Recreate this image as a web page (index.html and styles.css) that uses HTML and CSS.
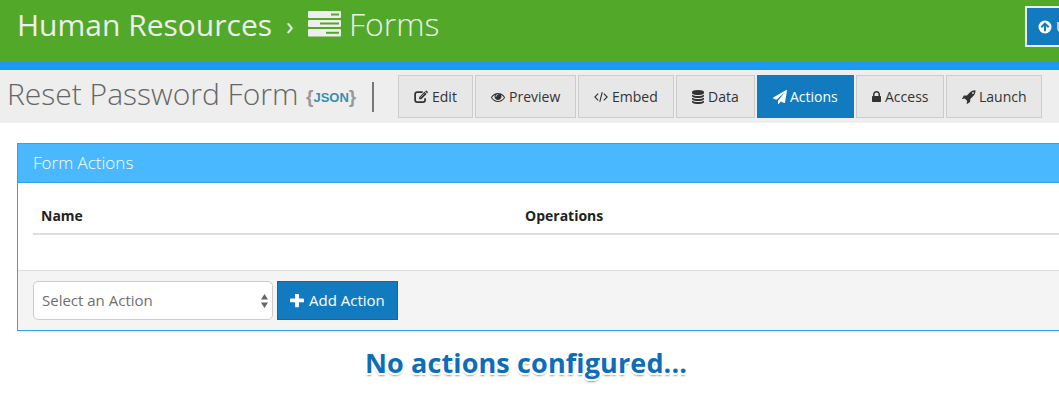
FILE: index.html
```html
<!DOCTYPE html>
<html lang="en">
<head>
<meta charset="utf-8">
<title>Reset Password Form</title>
<link rel="stylesheet" href="styles.css">
</head>
<body>
<header class="topbar">
  <nav class="crumbs"><span class="crumb">Human Resources</span><span class="sep">›</span>
    <svg class="server" viewBox="0 0 33 26"><g fill="#eee"><rect width="33" height="7" rx="1"/><rect y="9" width="33" height="7" rx="1"/><rect y="18" width="33" height="7.500" rx="1"/></g><g fill="#52a829"><rect x="23" y="2.500" width="8" height="2"/><rect x="12" y="11.500" width="19" height="2"/><rect x="18" y="20.800" width="13" height="2"/></g></svg>
    <span class="current">Forms</span></nav>
  <button class="upgrade"><svg viewBox="0 0 14 14"><circle cx="7" cy="7" r="6.500" fill="#fff"/><path d="M7 11.200V4M3.300 7.300 7 3.600l3.700 3.700" fill="none" stroke="#127bc0" stroke-width="2"/></svg><span>U</span></button>
</header>
<div class="toolbar">
  <h1 class="title">Reset Password Form</h1>
  <span class="json"><i>{</i><b>JSON</b><i>}</i></span>
  <span class="divider"></span>
  <nav class="tabs">
    <a class="tab edit"><svg viewBox="0 0 15 14"><path d="M9.300 1.700H3.600Q1.200 1.700 1.200 4v6.100q0 2.300 2.400 2.300h6q2.300 0 2.300-2.300V8.300" fill="none" stroke="currentColor" stroke-width="1.900"/><path d="M5.500 9.500V7.200l5.700-5.700 2.300 2.300-5.700 5.700zM11.800.9l.7-.7q.5-.4 1 0l1.200 1.200q.5.500 0 1l-.7.700z" fill="currentColor"/><path d="m6.800 7.600 4.300-4.300" stroke="#e7e7e7" stroke-width=".6"/></svg><span>Edit</span></a>
    <a class="tab preview"><svg viewBox="0 0 1792 1792"><path fill="currentColor" d="M1664 960q-152-236-381-353 61 104 61 225 0 185-131.500 316.500t-316.500 131.500-316.500-131.500-131.500-316.500q0-121 61-225-229 117-381 353 133 205 333.500 326.500t434.500 121.500 434.500-121.500 333.500-326.500zm-720-384q0-20-14-34t-34-14q-125 0-214.500 89.500t-89.500 214.500q0 20 14 34t34 14 34-14 14-34q0-86 61-147t147-61q20 0 34-14t14-34zm848 384q0 34-20 69-140 230-376.500 368.500t-499.500 138.500-499.500-139-376.500-368q-20-35-20-69t20-69q140-229 376.500-368t499.500-139 499.500 139 376.500 368q20 35 20 69z"/></svg><span>Preview</span></a>
    <a class="tab embed"><svg viewBox="0 0 15 14"><path d="M4.500 3.400.9 7l3.600 3.600M10.500 3.400 14.100 7l-3.600 3.600M8.800 1.700 6.200 12.300" fill="none" stroke="currentColor" stroke-width="1.200"/></svg><span>Embed</span></a>
    <a class="tab data"><svg viewBox="128 0 1536 1792"><path fill="currentColor" d="M896 768q237 0 443-43t325-127v170q0 69-103 128t-280 93.500-385 34.500-385-34.500-280-93.500-103-128v-170q119 84 325 127t443 43zm0 768q237 0 443-43t325-127v170q0 69-103 128t-280 93.500-385 34.500-385-34.500-280-93.500-103-128v-170q119 84 325 127t443 43zm0-384q237 0 443-43t325-127v170q0 69-103 128t-280 93.500-385 34.500-385-34.500-280-93.500-103-128v-170q119 84 325 127t443 43zm0-1152q208 0 385 34.500t280 93.500 103 128v128q0 69-103 128t-280 93.500-385 34.500-385-34.500-280-93.500-103-128v-128q0-69 103-128t280-93.500 385-34.500z"/></svg><span>Data</span></a>
    <a class="tab actions active"><svg viewBox="0 0 1792 1792"><path fill="currentColor" d="M1764 11q33 24 27 64l-256 1536q-5 29-32 45-14 8-31 8-11 0-24-5l-453-185-242 295q-18 23-49 23-13 0-22-4-19-7-30.500-23.500t-11.500-36.500v-349l864-1059-1069 925-395-162q-37-14-40-55-2-40 32-59l1664-960q15-9 32-9 20 0 36 11z"/></svg><span>Actions</span></a>
    <a class="tab access"><svg viewBox="320 0 1152 1792"><path fill="currentColor" d="M640 768h512v-192q0-106-75-181t-181-75-181 75-75 181v192zm832 96v576q0 40-28 68t-68 28h-960q-40 0-68-28t-28-68v-576q0-40 28-68t68-28h32v-192q0-184 132-316t316-132 316 132 132 316v192h32q40 0 68 28t28 68z"/></svg><span>Access</span></a>
    <a class="tab launch"><svg viewBox="0 0 14 14"><path fill="currentColor" fill-rule="evenodd" d="M13.200.3q.4 0 .4.400-.1 3.200-2.300 5.400L8.300 9.100l-.2 3-3.100 1.800-.4-.5.600-2.500-2.400-2.400-2.500.6-.3-.4L1.900 5.600l3-.2 2.900-2.900Q10 .4 13.200.3zM11 2.100a.9.900 0 1 0 0 1.800.9.900 0 0 0 0-1.800z"/></svg><span>Launch</span></a>
  </nav>
</div>
<main class="content">
  <section class="panel">
    <h2 class="panel-head">Form Actions</h2>
    <div class="panel-body">
      <div class="thead"><span>Name</span><span>Operations</span></div>
    </div>
    <footer class="panel-foot">
      <div class="select"><span>Select an Action</span><svg viewBox="0 0 7 14"><path d="M3.500 0 7 5.500H0zM3.500 14 0 8.500h7z" fill="#666"/></svg></div>
      <button class="add"><svg viewBox="192 192 1408 1408"><path fill="#fff" d="M1600 736v192q0 40-28 68t-68 28h-416v416q0 40-28 68t-68 28h-192q-40 0-68-28t-28-68v-416h-416q-40 0-68-28t-28-68v-192q0-40 28-68t68-28h416v-416q0-40 28-68t68-28h192q40 0 68 28t28 68v416h416q40 0 68 28t28 68z"/></svg><span>Add Action</span></button>
    </footer>
  </section>
  <p class="empty">No actions configured...</p>
</main>
</body>
</html>
```

FILE: styles.css
```css
* { box-sizing: border-box; }
body { margin: 0; height: 420px; overflow: hidden; background: #fff; font: 14px/20px "Open Sans", sans-serif; color: #333; }
svg { display: block; flex: none; }
h1, h2, p { margin: 0; font-weight: 400; }
button { font: inherit; }
.topbar { height: 70px; background: #52a829; border-bottom: 8px solid #1b9af0; display: flex; justify-content: space-between; padding-left: 17px; overflow: hidden; }
.crumbs { display: flex; height: 50px; align-items: center; color: #eee; font-size: 30px; line-height: 50px; white-space: nowrap; }
.crumb { width: 269px; }
.sep { width: 22px; font-size: 26px; }
.server { width: 33px; height: 26px; margin-top: -3px; }
.current { font-weight: 300; font-size: 32px; margin: -2px 0 0 8px; }
.upgrade { width: 34px; height: 41px; margin-top: 6px; padding: 0 0 0 11px; flex: none; background: #127bc0; border: 2px solid #eee; border-right: 0; color: #fff; display: flex; align-items: center; gap: 4px; overflow: hidden; }
.upgrade svg { width: 14px; height: 14px; }
.toolbar { height: 53px; background: #eee; display: flex; padding: 5px 0 0 7px; white-space: nowrap; }
.title { width: 299px; font-size: 30px; font-weight: 300; line-height: 37px; color: #666; }
.json { width: 51px; display: flex; line-height: 40px; font-family: "Liberation Sans", sans-serif; font-size: 13px; color: #3690b0; padding-top: 3px; }
.json i { font-style: normal; font-weight: 700; font-size: 19px; color: #999; line-height: 37px; }
.divider { width: 2px; height: 30px; margin: 7px 24px 0 15px; background: #777; }
.tabs { display: flex; gap: 2px; }
.tab { height: 43px; display: flex; align-items: center; gap: 4px; padding: 0 0 0 15px; border: 1px solid #ccc; background: #e7e7e7; }
.tab svg { width: 14px; height: 14px; }
.edit { width: 75px; }
.preview { width: 101px; }
.embed { width: 96px; }
.data { width: 79px; }
.data svg { width: 12px; }
.actions { width: 97px; gap: 3px; }
.access { width: 88px; }
.access svg { width: 9px; }
.launch { width: 96px; gap: 3px; }
.tab.active { background: #127bc0; border-color: #127bc0; color: #fff; }
.content { padding: 20px 0 0 17px; }
.panel { height: 188px; border: 1px solid #2fa4ee; border-right: 0; }
.panel-head { height: 39px; padding-left: 15px; background: #49b8ff; border-bottom: 1px solid #2fa4ee; color: #fff; font-size: 17px; font-weight: 300; line-height: 38px; }
.panel-body { height: 87px; padding: 15px 0 0 15px; }
.thead { height: 37px; padding: 8px; border-bottom: 2px solid #ddd; display: grid; grid-template-columns: 484px 1fr; font-weight: 700; color: #222; }
.panel-foot { height: 60px; padding: 10px 15px; background: #f4f4f4; border-top: 1px solid #ddd; display: flex; gap: 4px; }
.select { width: 240px; height: 39px; padding: 0 4px 0 8px; display: flex; align-items: center; justify-content: space-between; background: #fff; border: 1px solid #ccc; border-radius: 5px; color: #6f6f6f; font-size: 15px; }
.select span, .add span { padding-bottom: 2px; }
.select svg { width: 7px; height: 14px; }
.add { width: 121px; height: 39px; padding: 0 0 0 12px; display: flex; align-items: center; gap: 5px; background: #127bc0; border: 1px solid #0f69a5; color: #fff; font-size: 15px; white-space: nowrap; }
.add svg { width: 14px; height: 14px; }
.empty { margin: 12px 0 0 348px; font-size: 27px; letter-spacing: .12px; line-height: 40px; font-weight: 700; color: #0e6db8; white-space: nowrap; text-shadow: 2px 0 #fff, -2px 0 #fff, 0 2px #fff, 1px 2px #fff, -1px 2px #fff, 0 3px 2px #999; }
```
